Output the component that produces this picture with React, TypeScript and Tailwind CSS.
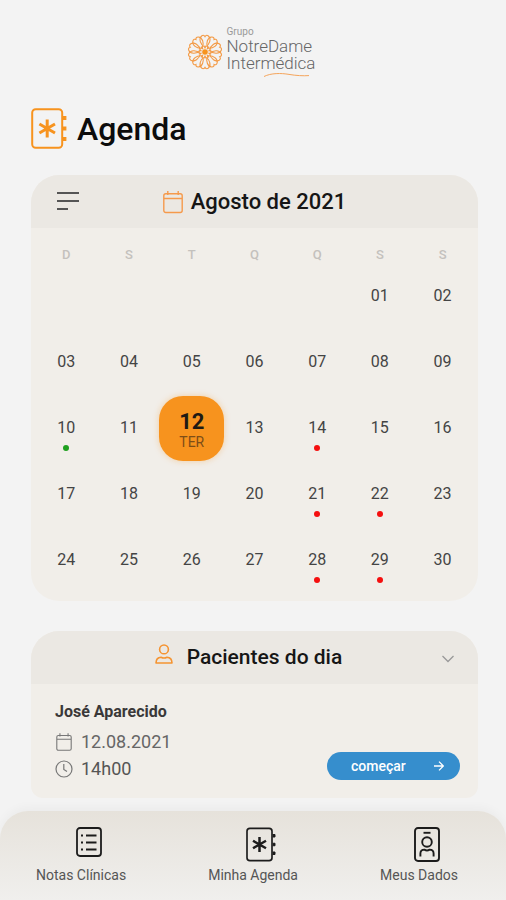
import React, { useState } from 'react';

type Day = { label: string; dot?: 'green' | 'red' } | null;

const WEEKDAYS = ['D', 'S', 'T', 'Q', 'Q', 'S', 'S'];

const GREEN_DAYS = ['10'];
const RED_DAYS = ['14', '21', '22', '28', '29'];

const buildWeeks = (): Day[][] => {
  const days: Day[] = [null, null, null, null, null];
  for (let i = 1; i <= 30; i++) {
    const label = String(i).padStart(2, '0');
    days.push({
      label,
      dot: GREEN_DAYS.includes(label) ? 'green' : RED_DAYS.includes(label) ? 'red' : undefined,
    });
  }
  return [0, 1, 2, 3, 4].map(w => days.slice(w * 7, w * 7 + 7));
};

const WEEKS = buildWeeks();
const WEEKDAY_NAMES = ['DOM', 'SEG', 'TER', 'QUA', 'QUI', 'SEX', 'SAB'];

function Rosette({ className }: { className?: string }) {
  const petals = [0, 36, 72, 108, 144, 180, 216, 252, 288, 324];
  return (
    <svg viewBox="0 0 36 36" fill="none" stroke="#f39a45" className={className} aria-hidden="true">
      {petals.map(a => (
        <g key={a} transform={`rotate(${a} 18 18)`}>
          <path d="M18 13.2 C13 10.5 11.6 4.6 14.6 2 C16.4 0.6 17.4 1.6 18 2.6 C18.6 1.6 19.6 0.6 21.4 2 C24.4 4.6 23 10.5 18 13.2 Z" strokeWidth="1.1" />
          <path d="M18 14.6 V11.4" strokeWidth="1.2" />
        </g>
      ))}
      <circle cx="18" cy="18" r="2.8" fill="#f7931e" stroke="none" />
    </svg>
  );
}

function NotebookIcon({ className }: { className?: string }) {
  return (
    <svg viewBox="0 0 36 41" fill="none" stroke="currentColor" className={className} aria-hidden="true">
      <rect x="1.2" y="1.2" width="30" height="38.6" rx="3.5" strokeWidth="2" />
      <path d="M32 8.5 H34.8 V11.5 H32 M32 19 H34.8 V22 H32 M32 29.5 H34.8 V32.5 H32" fill="currentColor" strokeWidth="1.2" />
      <path d="M16.2 11.6 V29.4 M8.4 16 L24 25 M24 16 L8.4 25" strokeWidth="3" />
    </svg>
  );
}

function CalendarIcon({ className }: { className?: string }) {
  return (
    <svg viewBox="0 0 20 23" fill="none" stroke="currentColor" strokeWidth="1.4" className={className} aria-hidden="true">
      <rect x="0.8" y="3.2" width="18.4" height="18.8" rx="2" />
      <path d="M1 8 H19 M4.8 0.4 V4.6 M15.2 0.4 V4.6" />
    </svg>
  );
}

function ClockIcon({ className }: { className?: string }) {
  return (
    <svg viewBox="0 0 18 18" fill="none" stroke="currentColor" strokeWidth="1.2" className={className} aria-hidden="true">
      <circle cx="9" cy="9" r="8" />
      <path d="M8.8 4 V9.4 L12 11.6" />
    </svg>
  );
}

function PersonIcon({ className }: { className?: string }) {
  return (
    <svg viewBox="0 0 18 20" fill="none" stroke="currentColor" strokeWidth="1.6" className={className} aria-hidden="true">
      <circle cx="9" cy="5.4" r="4.4" />
      <path d="M1 19 C1 15.2 3 13.4 6 13.2 C8 14.2 10 14.2 12 13.2 C15 13.4 17 15.2 17 19 Z" strokeLinejoin="round" />
    </svg>
  );
}

function ListIcon({ className }: { className?: string }) {
  return (
    <svg viewBox="0 0 26 30" fill="none" stroke="currentColor" className={className} aria-hidden="true">
      <rect x="1" y="1" width="24" height="28" rx="3" strokeWidth="1.8" />
      <path d="M10 8.5 H20.5 M10 15.5 H20.5 M10 22.5 H20.5" strokeWidth="1.8" />
      <path d="M5 8.5 H7 M5 15.5 H7 M5 22.5 H7" strokeWidth="2" />
    </svg>
  );
}

function BadgeIcon({ className }: { className?: string }) {
  return (
    <svg viewBox="0 0 26 35" fill="none" stroke="currentColor" strokeWidth="1.9" className={className} aria-hidden="true">
      <rect x="1" y="1" width="24" height="33" rx="3" />
      <path d="M9.5 5.8 H16.5" />
      <circle cx="13" cy="15" r="4.8" />
      <path d="M6.4 29.5 V26.6 C6.4 24 8 22.6 10.4 22.6 C12 23.6 14 23.6 15.6 22.6 C18 22.6 19.6 24 19.6 26.6 V29.5" />
    </svg>
  );
}

function CalendarCard() {
  const [selected, setSelected] = useState('12');

  return (
    <section className="rounded-[28px] bg-[#f1eee9] overflow-hidden">
      <div className="relative h-[53px] flex items-center justify-center gap-2 bg-[#ebe8e3]">
        <button aria-label="Menu" className="absolute left-[26px] top-4 text-[#555]">
          <svg viewBox="0 0 22 20" fill="none" stroke="currentColor" strokeWidth="2" className="w-[22px] h-5">
            <path d="M0 2 H22 M0 10 H22 M0 18 H11" />
          </svg>
        </button>
        <CalendarIcon className="w-5 h-6 text-[#f59a4c]" />
        <h2 className="text-[22px] leading-7 font-medium text-[#161616]">Agosto de 2021</h2>
      </div>

      <div className="px-1 pb-2">
        <table className="w-full table-fixed border-collapse text-center">
          <thead>
            <tr className="h-[35px]">
              {WEEKDAYS.map((d, i) => (
                <th key={i} className="p-0 align-bottom text-[13px] leading-4 font-medium text-[#c4c1bd]">{d}</th>
              ))}
            </tr>
          </thead>
          <tbody>
            {WEEKS.map((week, w) => (
              <tr key={w} className="h-[66px]">
                {week.map((day, i) => (
                  <td key={i} className="p-0">
                    {day && (
                      <div className="flex justify-center">
                        {day.label === selected ? (
                          <button className="size-[65px] shrink-0 pt-2 flex flex-col items-center justify-center rounded-[24px] bg-[#f7931e] shadow-[0_0_6px_rgba(247,147,30,0.35)]">
                            <span className="text-[22px] leading-5 font-bold text-[#1f1a14]">{day.label}</span>
                            <span className="text-sm leading-5 text-[#7d4d17]">{WEEKDAY_NAMES[i]}</span>
                          </button>
                        ) : (
                          <button
                            onClick={() => setSelected(day.label)}
                            className="relative size-12 text-base text-[#444]"
                          >
                            {day.label}
                            {day.dot && (
                              <span className={`absolute bottom-px left-1/2 -translate-x-1/2 size-[6px] rounded-full ${day.dot === 'green' ? 'bg-[#1fa01f]' : 'bg-[#f50f0f]'}`} />
                            )}
                          </button>
                        )}
                      </div>
                    )}
                  </td>
                ))}
              </tr>
            ))}
          </tbody>
        </table>
      </div>
    </section>
  );
}

function PatientsCard() {
  return (
    <section className="rounded-t-[28px] rounded-b-xl bg-[#f1eee9] overflow-hidden">
      <div className="relative h-[53px] pt-3 pr-3 flex items-baseline justify-center gap-[14px] bg-[#ebe8e3]">
        <PersonIcon className="w-[18px] h-5 text-[#f59432]" />
        <h2 className="text-[21px] leading-7 font-medium text-[#161616]">Pacientes do dia</h2>
        <button aria-label="Recolher" className="absolute right-6 top-6 text-[#999]">
          <svg viewBox="0 0 12 8" fill="none" stroke="currentColor" strokeWidth="1.3" className="w-3 h-2">
            <path d="M0.5 1 L6 6.5 L11.5 1" />
          </svg>
        </button>
      </div>

      <div className="flex items-end justify-between pl-6 pr-[18px] pt-4 pb-4">
        <div>
          <h3 className="text-base leading-6 font-bold text-[#3a3838]">José Aparecido</h3>
          <p className="mt-1 flex items-center gap-2 text-lg leading-[27px] text-[#666]">
            <CalendarIcon className="w-[18px] h-[18px] text-[#777]" />
            12.08.2021
          </p>
          <p className="flex items-center gap-2 text-lg leading-[27px] text-[#555]">
            <ClockIcon className="size-[18px] text-[#777]" />
            14h00
          </p>
        </div>
        <button className="mb-0.5 w-[133px] h-7 flex items-center justify-between pl-6 pr-4 rounded-full bg-[#368ecd] text-white text-sm font-medium">
          começar
          <svg viewBox="0 0 10 10" fill="none" stroke="currentColor" strokeWidth="1.3" className="size-[10px]" aria-hidden="true">
            <path d="M0 5 H9.4 M5 0.6 L9.4 5 L5 9.4" />
          </svg>
        </button>
      </div>
    </section>
  );
}

const NAV_ITEMS = [
  { label: 'Notas Clínicas', icon: <ListIcon className="w-[26px] h-[30px]" /> },
  { label: 'Minha Agenda', icon: <NotebookIcon className="w-[30px] h-[35px]" /> },
  { label: 'Meus Dados', icon: <BadgeIcon className="w-[26px] h-[35px]" /> },
];

export default function App() {
  return (
    <div className="min-h-screen flex flex-col bg-[#f3f3f3] font-['Roboto',sans-serif]">
      <header className="pt-[26px] pr-1 flex items-center justify-center gap-1">
        <Rosette className="size-9" />
        <div className="text-[#666]">
          <div className="text-[10px] leading-3 text-[#999]">Grupo</div>
          <div className="text-[17px] leading-[17px] font-light">NotreDame</div>
          <div className="text-[17px] leading-[17px] font-light">Intermédica</div>
          <svg viewBox="0 0 88 6" fill="none" stroke="#f5a55c" strokeWidth="1" className="w-[88px] h-[6px]" aria-hidden="true">
            <path d="M37 4.5 C44 1 54 1 62 2.4 C69 3.6 76 4 82 3.6" />
          </svg>
        </div>
      </header>

      <main className="pl-[31px] pr-7 pb-3">
        <div className="mt-[30px] mb-[26px] flex items-center gap-[10px]">
          <NotebookIcon className="w-9 h-[41px] text-[#f7931e]" />
          <h1 className="text-[32px] leading-10 font-medium text-[#0c0c0c]">Agenda</h1>
        </div>
        <CalendarCard />
        <div className="mt-[30px]">
          <PatientsCard />
        </div>
      </main>

      <nav className="mt-auto h-[89px] pl-9 pr-12 pt-4 flex items-start justify-between rounded-t-[28px] bg-linear-to-b from-[#e6e2db] to-[#f0efed] shadow-[0_-4px_10px_rgba(0,0,0,0.03)]">
        {NAV_ITEMS.map(item => (
          <a key={item.label} href="#" className="flex flex-col items-center text-[#1c1c1c]">
            <span className="h-10 pl-4">{item.icon}</span>
            <span className="text-sm leading-4 text-[#555]">{item.label}</span>
          </a>
        ))}
      </nav>
    </div>
  );
}
